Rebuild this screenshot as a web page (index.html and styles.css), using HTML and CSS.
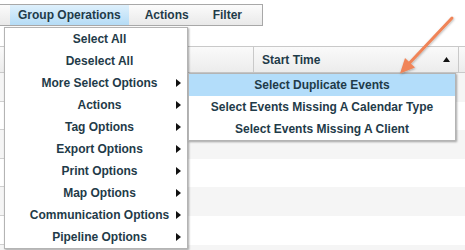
FILE: index.html
```html
<!DOCTYPE html>
<html>
<head>
<meta charset="utf-8">
<link rel="stylesheet" href="styles.css">
</head>
<body>
<div class="menubar">
  <div class="mb-item active">Group Operations</div>
  <div class="mb-item">Actions</div>
  <div class="mb-item">Filter</div>
</div>

<div class="grid">
  <div class="grid-head">
    <div class="hcell"></div>
    <div class="hcell sep">
      <span>Start Time</span>
      <svg class="sort" width="7" height="5" viewBox="0 0 7 5"><polygon points="3.5,0 7,5 0,5" fill="#111"/></svg>
    </div>
    <div class="hcell sep"></div>
  </div>
  <div class="row"><div class="lc"></div></div>
  <div class="row"><div class="lc"></div></div>
  <div class="row"><div class="lc"></div></div>
  <div class="row"><div class="lc"></div></div>
  <div class="row"><div class="lc"></div></div>
  <div class="row"><div class="lc"></div></div>
  <div class="row last"></div>
</div>

<ul class="menu">
  <li class="mi">Select All</li>
  <li class="mi">Deselect All</li>
  <li class="mi sub">More Select Options</li>
  <li class="mi sub">Actions</li>
  <li class="mi sub">Tag Options</li>
  <li class="mi sub">Export Options</li>
  <li class="mi sub">Print Options</li>
  <li class="mi sub">Map Options</li>
  <li class="mi sub">Communication Options</li>
  <li class="mi sub">Pipeline Options</li>
</ul>

<ul class="submenu">
  <li class="si hover">Select Duplicate Events</li>
  <li class="si">Select Events Missing A Calendar Type</li>
  <li class="si">Select Events Missing A Client</li>
</ul>

<svg class="callout" width="465" height="250" viewBox="0 0 465 250">
  <defs>
    <filter id="sh" x="-20%" y="-20%" width="140%" height="140%">
      <feDropShadow dx="0.5" dy="1" stdDeviation="1" flood-color="#000" flood-opacity="0.3"/>
    </filter>
  </defs>
  <g filter="url(#sh)">
    <line x1="452" y1="18" x2="410" y2="62.5" stroke="#f08458" stroke-width="3" stroke-linecap="round"/>
    <polygon points="400,73.5 415,67.5 405,58" fill="#f08458"/>
  </g>
</svg>
</body>
</html>
```

FILE: styles.css
```css
html, body {
  margin: 0;
  padding: 0;
  background: #fff;
  overflow: hidden;
}
body {
  font-family: "Liberation Sans", Arial, Helvetica, sans-serif;
  font-size: 12px;
  font-weight: bold;
  color: #1f3b49;
  width: 465px;
  height: 250px;
  position: relative;
}

.menubar {
  display: flex;
  gap: 8px;
  width: fit-content;
  margin: 4px 0 0 -1px;
  padding: 0 12px 0 10px;
  border: 1px solid #a8a8a8;
  background: linear-gradient(#fbfbfb, #e9e9e9);
}
.mb-item {
  line-height: 20px;
  padding: 0 8px;
  color: #1f3b49;
}
.mb-item.active {
  background: linear-gradient(#def0fc, #b5dcf6);
}

.grid {
  margin-top: 20px;
}
.grid-head {
  display: grid;
  grid-template-columns: 253px 205px 1fr;
  height: 25px;
  border-top: 1px solid #c9c9c9;
  border-bottom: 1px solid #c9c9c9;
  background: linear-gradient(#fafafa, #ececec);
}
.hcell {
  display: flex;
  align-items: center;
  justify-content: space-between;
  padding: 0 8px;
}
.hcell.sep {
  border-left: 1px solid #c9c9c9;
}
.row {
  height: 28.6px;
  background: #fff;
}
.row:nth-child(even) {
  background: #f5f5f5;
}
.row.last {
  height: 5px;
}
.lc {
  width: 4px;
  height: 100%;
  box-sizing: border-box;
  border-bottom: 1px solid #d0d0d0;
}

.menu, .submenu {
  list-style: none;
  margin: 0;
  padding: 0;
  position: absolute;
  background: #fff;
  border: 1px solid #b4b4b4;
  box-shadow: 1px 1px 2px rgba(0, 0, 0, 0.35);
}
.menu {
  left: 4px;
  top: 27px;
  width: 182px;
}
.mi {
  position: relative;
  height: 22px;
  line-height: 22px;
  text-align: center;
  padding: 0 10px 0 17px;
  white-space: nowrap;
}
.mi.sub::after {
  content: "";
  position: absolute;
  right: 6px;
  top: 7px;
  border-left: 5px solid #111;
  border-top: 4px solid transparent;
  border-bottom: 4px solid transparent;
}

.submenu {
  left: 188px;
  top: 73px;
  width: 266px;
}
.si {
  height: 22px;
  line-height: 22px;
  text-align: center;
  white-space: nowrap;
}
.si.hover {
  background: #b3ddfa;
}

.callout {
  position: absolute;
  left: 0;
  top: 0;
  pointer-events: none;
}
```
